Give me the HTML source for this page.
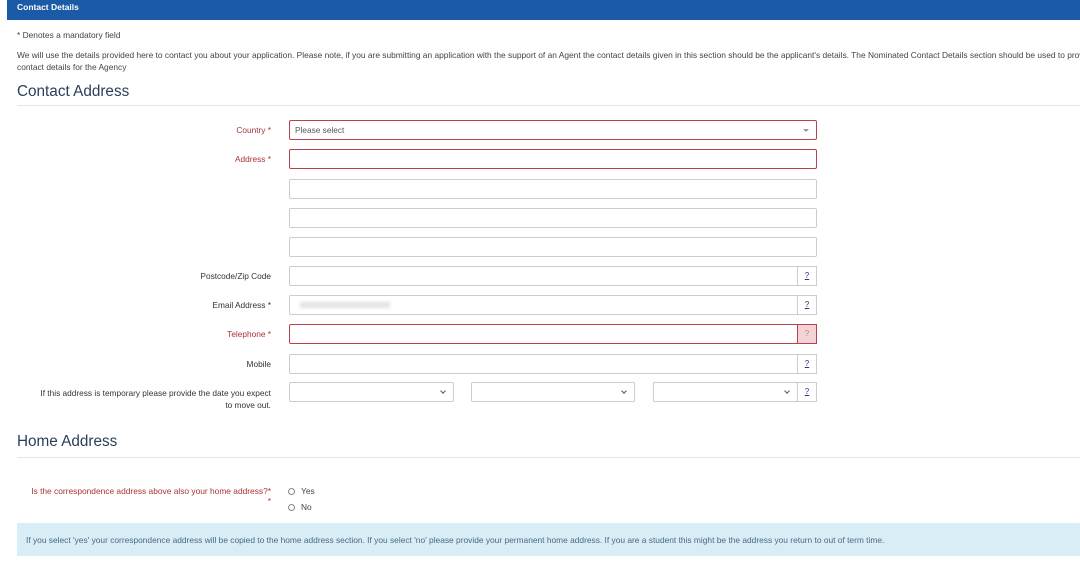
<!DOCTYPE html>
<html><head><style>
body{margin:0;width:1080px;height:588px;background:#fff;font-family:"Liberation Sans",sans-serif;position:relative;overflow:hidden;color:#333}
.a{position:absolute}
.t{font-size:8.4px;color:#444}
.lbl{position:absolute;right:809px;font-size:8.3px;color:#333;text-align:right;white-space:nowrap}
.red{color:#a33}
.in{position:absolute;left:289px;width:526px;height:18px;border:1px solid #ccc;border-radius:2px;background:#fff}
.err{border-color:#b5444a}
.q{position:absolute;left:797px;width:18px;height:18px;border:1px solid #ccc;background:#fff;font-size:8px;color:#337;text-align:center;line-height:18px;text-decoration:underline}
.h{position:absolute;left:17px;font-size:15.3px;color:#2a3f5a}
.hr{position:absolute;left:17px;right:0;height:1px;background:#e6e6e6}
.sel{position:absolute;height:18px;border:1px solid #ccc;border-radius:2px;background:#fff}
.sel:after{content:"";position:absolute;right:8px;top:6px;width:3px;height:3px;border-right:1px solid #555;border-bottom:1px solid #555;transform:rotate(45deg)}
.r{position:absolute;width:5px;height:5px;border:1px solid #888;border-radius:50%}
</style></head><body>
<div class="a" style="left:7px;top:0;right:0;height:20px;background:#1b5aa6"></div>
<div class="a" style="left:17px;top:2px;font-size:8.5px;color:#fff;font-weight:bold">Contact Details</div>
<div class="a t" style="left:17px;top:30px">* Denotes a mandatory field</div>
<div class="a t" style="left:17px;top:49px;width:1070px;line-height:12px;white-space:nowrap">We will use the details provided here to contact you about your application. Please note, if you are submitting an application with the support of an Agent the contact details given in this section should be the applicant's details. The Nominated Contact Details section should be used to provide<br>contact details for the Agency</div>
<div class="h" style="top:83px">Contact Address</div>
<div class="hr" style="top:105px"></div>

<div class="lbl red" style="top:125px">Country *</div>
<div class="in err" style="top:120px"><span class="a" style="left:5px;top:4px;font-size:8.3px;color:#555">Please select</span><span class="a" style="right:7px;top:8px;border-left:3px solid transparent;border-right:3px solid transparent;border-top:3px solid #999"></span></div>
<div class="lbl red" style="top:154px">Address *</div>
<div class="in err" style="top:149px"></div>
<div class="in" style="top:179px"></div>
<div class="in" style="top:208px"></div>
<div class="in" style="top:237px"></div>

<div class="lbl" style="top:271px">Postcode/Zip Code</div>
<div class="in" style="top:266px"></div><div class="q" style="top:266px">?</div>
<div class="lbl" style="top:300px">Email Address *</div>
<div class="in" style="top:295px"><span class="a" style="left:10px;top:6px;width:90px;height:6px;background:#e4e4e4;filter:blur(1.5px)"></span></div><div class="q" style="top:295px">?</div>
<div class="lbl red" style="top:329px">Telephone *</div>
<div class="in err" style="top:324px"></div><div class="q" style="top:324px;background:#f3d3d5;border-color:#b5444a;color:#a88;text-decoration:none">?</div>
<div class="lbl" style="top:359px">Mobile</div>
<div class="in" style="top:354px"></div><div class="q" style="top:354px">?</div>
<div class="lbl" style="top:387px;line-height:12px">If this address is temporary please provide the date you expect<br>to move out.</div>
<div class="sel" style="left:289px;top:382px;width:163px"></div>
<div class="sel" style="left:471px;top:382px;width:162px"></div>
<div class="sel" style="left:653px;top:382px;width:143px"></div>
<div class="q" style="top:382px">?</div>

<div class="h" style="top:433px">Home Address</div>
<div class="hr" style="top:457px"></div>
<div class="a t red" style="left:0px;top:486px;line-height:10px;text-align:right;width:271px;white-space:nowrap">Is the correspondence address above also your home address?*<br>*</div>
<div class="r" style="left:288px;top:488px"></div><div class="a t" style="left:301px;top:486px">Yes</div>
<div class="r" style="left:288px;top:504px"></div><div class="a t" style="left:301px;top:502px">No</div>
<div class="a" style="left:17px;top:523px;right:0;height:33px;background:#d9edf7"></div>
<div class="a t" style="left:26px;top:535px;color:#4a6a80;white-space:nowrap">If you select 'yes' your correspondence address will be copied to the home address section. If you select 'no' please provide your permanent home address. If you are a student this might be the address you return to out of term time.</div>
</body></html>
